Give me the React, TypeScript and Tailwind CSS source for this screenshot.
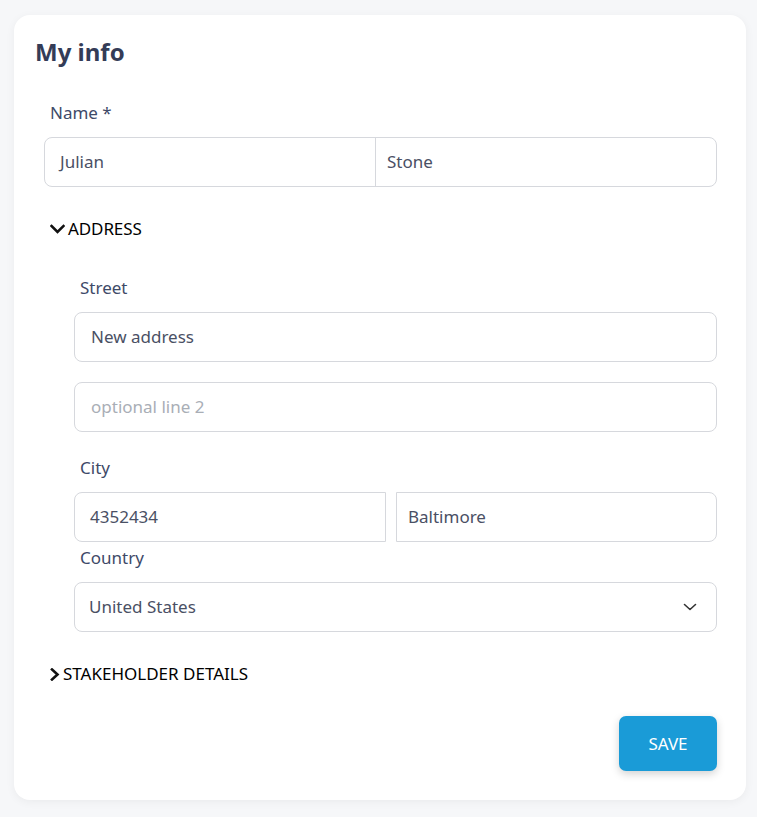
import React from "react";

const font = { fontFamily: '"Noto Sans", "Open Sans", Arial, sans-serif' };

function Label({ children, className = "" }: { children: React.ReactNode; className?: string }) {
  return <div className={`text-[17px] leading-[24px] text-[#3e4a68] ${className}`}>{children}</div>;
}

export default function App() {
  return (
    <div className="min-h-[817px] w-[757px] bg-[#f6f7f9] pt-[15px] pl-[14px]" style={font}>
      <div className="w-[732px] h-[785px] bg-white rounded-[16px] shadow-[0_2px_10px_rgba(0,0,0,0.05)] pt-[21px] pl-[21px] pr-[29px]">
        <h1 className="text-[24px] leading-[32px] font-bold text-[#343c57]">My info</h1>

        <div className="ml-[9px] mt-[33px]">
          <Label className="ml-[6px]">Name *</Label>
          <div className="mt-[12px] flex h-[50px] w-[673px] rounded-[8px] border border-[#d6d8dd] text-[17px] text-[#4a5064]">
            <div className="w-[331px] border-r border-[#d6d8dd] flex items-center pl-[15px]">Julian</div>
            <div className="flex-1 flex items-center pl-[11px]">Stone</div>
          </div>

          <div className="mt-[30px] flex items-center h-[24px] ml-[6px] text-[17px] text-black">
            <svg width="15" height="10" viewBox="0 0 15 10" className="mr-[3px]">
              <path d="M1.5 2 L7.5 8 L13.5 2" fill="none" stroke="#111" strokeWidth="2.6" strokeLinecap="square" />
            </svg>
            <span className="tracking-[-0.1px]">ADDRESS</span>
          </div>

          <div className="ml-[30px]">
            <Label className="mt-[35px] ml-[6px]">Street</Label>
            <div className="mt-[12px] h-[50px] w-[643px] rounded-[8px] border border-[#d6d8dd] flex items-center pl-[16px] text-[17px] text-[#4a5064]">
              New address
            </div>
            <div className="mt-[20px] h-[50px] w-[643px] rounded-[8px] border border-[#d6d8dd] flex items-center pl-[16px] text-[17px] text-[#a9aeb6]">
              optional line 2
            </div>

            <Label className="mt-[24px] ml-[6px]">City</Label>
            <div className="mt-[12px] flex gap-[10px] w-[643px] text-[17px] text-[#4a5064]">
              <div className="h-[50px] w-[312px] rounded-l-[8px] border border-[#d6d8dd] flex items-center pl-[15px]">4352434</div>
              <div className="h-[50px] flex-1 rounded-r-[8px] border border-[#d6d8dd] flex items-center pl-[11px]">Baltimore</div>
            </div>

            <Label className="mt-[4px] ml-[6px]">Country</Label>
            <div className="mt-[12px] h-[50px] w-[643px] rounded-[8px] border border-[#d6d8dd] flex items-center justify-between pl-[14px] pr-[19px] text-[17px] text-[#4a5064]">
              <span>United States</span>
              <svg width="14" height="8" viewBox="0 0 14 8">
                <path d="M1.5 1.5 L7 6.5 L12.5 1.5" fill="none" stroke="#333" strokeWidth="1.6" strokeLinecap="round" strokeLinejoin="round" />
              </svg>
            </div>
          </div>

          <div className="mt-[30px] flex items-center h-[24px] ml-[6px] text-[17px] text-black">
            <svg width="10" height="13" viewBox="0 0 10 13" className="mr-[3px]">
              <path d="M2 1.5 L7.5 6.5 L2 11.5" fill="none" stroke="#111" strokeWidth="2.6" strokeLinecap="square" />
            </svg>
            <span>STAKEHOLDER DETAILS</span>
          </div>

          <div className="mt-[30px] flex justify-end w-[673px]">
            <button className="h-[55px] w-[98px] rounded-[7px] bg-[#1a9bd7] text-white text-[17px] shadow-[0_3px_8px_rgba(0,0,0,0.18)]">
              SAVE
            </button>
          </div>
        </div>
      </div>
    </div>
  );
}
